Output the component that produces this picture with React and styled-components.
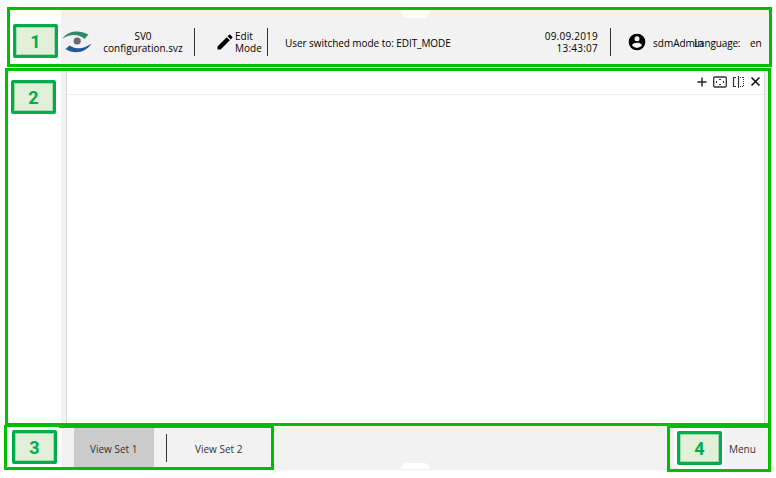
import React from 'react';
import styled, { createGlobalStyle } from 'styled-components';

const Global = createGlobalStyle`
  * { box-sizing: border-box; }
  body { margin: 0; background: #fff; font-family: "Open Sans", "Noto Sans", sans-serif; font-size: 10px; color: #000; }
`;

const Page = styled.div`
  position: relative;
  width: 776px;
  height: 478px;
  overflow: hidden;
  padding: 8px 5px 8px 61px;
`;

const Shell = styled.div`
  display: flex;
  flex-direction: column;
  height: 462px;
  background: #f2f2f2;
`;

const Header = styled.header`
  position: relative;
  display: flex;
  align-items: center;
  flex: 0 0 59px;
  padding-top: 8px;
`;

const Notch = styled.div`
  position: absolute;
  left: 340px;
  width: 29px;
  height: 8px;
  background: #fff;
  ${(p) => (p.$bottom ? 'bottom: 1px; height: 6px; border-radius: 8px 8px 0 0;' : 'top: 2px; border-radius: 0 0 8px 8px;')}
`;

const Divider = styled.span`
  flex: 0 0 1px;
  height: 28px;
  margin-left: ${(p) => p.$gap || 0}px;
  background: #333;
`;

const Label = styled.span`
  flex: 0 0 ${(p) => p.$w}px;
  min-width: 0;
  margin-left: ${(p) => p.$gap || 0}px;
  padding-top: ${(p) => p.$drop || 0}px;
  line-height: 12px;
  text-align: ${(p) => p.$align || 'left'};
  letter-spacing: ${(p) => p.$track || 0}px;
  white-space: nowrap;
`;

const Icon = styled.svg`
  flex: 0 0 auto;
  display: block;
  margin-left: ${(p) => p.$gap || 0}px;
`;

const Panel = styled.main`
  flex: 0 0 357px;
  margin: 2px 5px 0 5px;
  width: 699px;
  border: 1px solid #d6d6d6;
  border-top: 0;
  background: #fff;
`;

const Toolbar = styled.div`
  display: flex;
  align-items: center;
  height: 26px;
  border-bottom: 1px solid #ececec;
`;

const Footer = styled.footer`
  position: relative;
  display: flex;
  align-items: center;
  flex: 1;
  color: #333;
`;

const Tab = styled.div`
  flex: 0 0 ${(p) => p.$w}px;
  height: 100%;
  display: flex;
  align-items: center;
  padding-left: ${(p) => p.$pad}px;
  margin-left: ${(p) => p.$gap || 0}px;
  background: ${(p) => (p.$active ? '#cbcbcb' : 'transparent')};
`;

const Frame = styled.div`
  position: absolute;
  left: ${(p) => p.$x}px;
  top: ${(p) => p.$y}px;
  width: ${(p) => p.$w}px;
  height: ${(p) => p.$h}px;
  border: 3px solid #00be00;
`;

const Backing = styled.div`
  position: absolute;
  left: ${(p) => p.$x}px;
  top: ${(p) => p.$y}px;
  width: ${(p) => p.$w}px;
  height: 40px;
  background: #fff;
`;

const Badge = styled.div`
  position: absolute;
  left: ${(p) => p.$x}px;
  top: ${(p) => p.$y}px;
  width: 45px;
  height: 34px;
  border: 3px solid #00ad4d;
  border-radius: 2px;
  background: #e2efd9;
  box-shadow: inset 0 0 0 1px #a4d9ac;
  color: #00ad4d;
  font: bold 18px/29px Roboto, "Liberation Sans", sans-serif;
  text-align: center;
`;

export default function App() {
  return (
    <Page>
      <Global />
      <Shell>
        <Header>
          <Notch />
          <Icon $gap={1} width="31" height="24" viewBox="0 0 31 24">
            <path d="M.5 8.5C6 1 16-.5 26.5 4.5L22.5 9C17 4 9 3.5 .5 8.5Z" fill="#338866" />
            <path d="M29.5 13.5C24 23 12 24.5 3.5 19L7.5 15.5C15 20 22 19 29.5 13.5Z" fill="#26569a" />
            <circle cx="15.2" cy="11" r="3.6" fill="#68686e" />
          </Icon>
          <Label $w={84} $gap={8} $drop={1} $align="center">SV0<br />configuration.svz</Label>
          <Divider $gap={9} />
          <Icon $gap={20} width="20" height="20" viewBox="0 0 24 24">
            <path d="M3 17.25V21h3.75L17.81 9.94l-3.75-3.75zM20.71 7.04a1 1 0 0 0 0-1.41l-2.34-2.34a1 1 0 0 0-1.41 0l-1.83 1.83 3.75 3.75z" />
          </Icon>
          <Label $w={32} $drop={1}>Edit<br />Mode</Label>
          <Divider />
          <Label $w={257} $gap={17} $drop={3} $track={-0.06}>User switched mode to: EDIT_MODE</Label>
          <Label $w={56} $drop={1} $track={0.23} $align="right">09.09.2019<br />13:43:07</Label>
          <Divider $gap={12} />
          <Icon $gap={16} width="20" height="20" viewBox="0 0 24 24">
            <path d="M12 2a10 10 0 1 0 0 20 10 10 0 0 0 0-20m0 3a3 3 0 1 1 0 6 3 3 0 0 1 0-6m0 14.2a7.2 7.2 0 0 1-6-3.22c.03-1.99 4-3.08 6-3.08s5.97 1.09 6 3.08a7.2 7.2 0 0 1-6 3.22" />
          </Icon>
          <Label $w={41} $gap={6} $drop={2}>sdmAdmin</Label>
          <Label $w={56} $drop={2} $track={-0.15}>Language:</Label>
          <Label $w={14} $drop={2}>en</Label>
        </Header>
        <Panel>
          <Toolbar>
            <Icon $gap={630} width="10" height="10" viewBox="0 0 10 10">
              <path d="M5 .5V9.5M.5 5H9.5" stroke="#222" strokeWidth="1.4" />
            </Icon>
            <Icon $gap={6} width="14" height="12" viewBox="0 0 14 12" fill="none" stroke="#333">
              <rect x=".7" y="1" width="12.6" height="10" rx="1" strokeWidth="1.3" />
              <path d="M6 3.5H8M6 8.5H8M3.5 5V7M10.5 5V7" />
            </Icon>
            <Icon $gap={5} width="12" height="12" viewBox="0 0 12 12" fill="none" stroke="#333">
              <path d="M4 1.5H1.5V10.5H4" strokeWidth="1.2" />
              <path d="M6.5 0V12" strokeWidth="1.2" />
              <path d="M8 1.5H11.5M11.5 1V11M8 10.5H11.5" strokeDasharray="1 1" />
            </Icon>
            <Icon $gap={6} width="11" height="11" viewBox="0 0 11 11">
              <path d="M1.5 1.5L9.5 9.5M9.5 1.5L1.5 9.5" stroke="#111" strokeWidth="1.6" />
            </Icon>
          </Toolbar>
        </Panel>
        <Footer>
          <Tab $active $w={80} $gap={13} $pad={16}><Label $w={48} $drop={1}>View Set 1</Label></Tab>
          <Divider $gap={12} />
          <Tab $w={106} $pad={28}><Label $w={50} $drop={1}>View Set 2</Label></Tab>
          <Label $w={30} $gap={456} $drop={1}>Menu</Label>
          <Notch $bottom />
        </Footer>
      </Shell>
      <Frame $x={7} $y={7} $w={765} $h={60} />
      <Frame $x={5} $y={68} $w={766} $h={358} />
      <Frame $x={4} $y={425} $w={270} $h={45} />
      <Frame $x={667} $y={425} $w={104} $h={47} />
      <Backing $x={7} $y={427} $w={52} />
      <Backing $x={674} $y={428} $w={50} />
      <Badge $x={13} $y={24}>1</Badge>
      <Badge $x={11} $y={80}>2</Badge>
      <Badge $x={12} $y={430}>3</Badge>
      <Badge $x={677} $y={431}>4</Badge>
    </Page>
  );
}
